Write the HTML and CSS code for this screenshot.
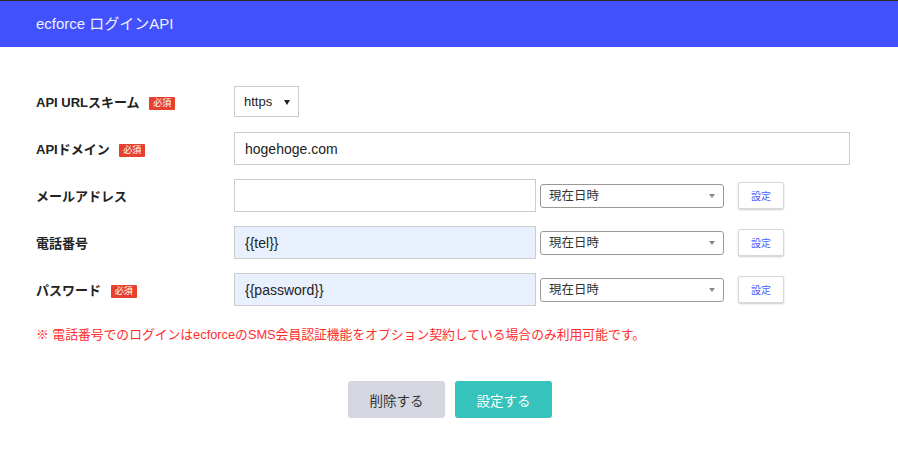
FILE: index.html
```html
<!DOCTYPE html>
<html lang="ja">
<head>
    <meta charset="UTF-8">
    <meta name="viewport" content="width=device-width, initial-scale=1.0">
    <title>ecforce ログインAPI</title>
    <link rel="stylesheet" href="styles.css">
</head>
<body>
    <header class="topbar">ecforce ログインAPI</header>

    <form class="settings">
        <div class="row">
            <label class="label">API URLスキーム <span class="required">必須</span></label>
            <div class="select-box scheme">
                <select>
                    <option>https</option>
                    <option>http</option>
                </select>
            </div>
        </div>
        <div class="row">
            <label class="label">APIドメイン <span class="required">必須</span></label>
            <input class="field wide" type="text" value="hogehoge.com">
        </div>
        <div class="row">
            <label class="label">メールアドレス</label>
            <input class="field" type="text" value="">
            <div class="select-box date">
                <select><option>現在日時</option></select>
            </div>
            <button type="button" class="small-btn">設定</button>
        </div>
        <div class="row">
            <label class="label">電話番号</label>
            <input class="field filled" type="text" value="{{tel}}">
            <div class="select-box date">
                <select><option>現在日時</option></select>
            </div>
            <button type="button" class="small-btn">設定</button>
        </div>
        <div class="row">
            <label class="label">パスワード <span class="required">必須</span></label>
            <input class="field filled" type="text" value="{{password}}">
            <div class="select-box date">
                <select><option>現在日時</option></select>
            </div>
            <button type="button" class="small-btn">設定</button>
        </div>

        <p class="note">※ 電話番号でのログインはecforceのSMS会員認証機能をオプション契約している場合のみ利用可能です。</p>

        <div class="actions">
            <button type="button" class="btn btn-delete">削除する</button>
            <button type="submit" class="btn btn-save">設定する</button>
        </div>
    </form>
</body>
</html>
```

FILE: styles.css
```css
body {
    font-family: "Liberation Sans", "Noto Sans CJK JP", sans-serif;
    background-color: #fff;
    color: #222;
    margin: 0;
}
.topbar {
    height: 46px;
    border-top: 1px solid #2b2b2b;
    background-color: #4151fe;
    color: #eef0ff;
    font-size: 15px;
    line-height: 46px;
    padding-left: 36px;
}
.settings {
    padding: 38px 36px 0;
}
.row {
    display: flex;
    align-items: center;
    height: 33px;
    margin-bottom: 14px;
}
.label {
    width: 198px;
    flex-shrink: 0;
    font-size: 13px;
    font-weight: bold;
    color: #222;
}
.required {
    display: inline-block;
    margin-left: 6px;
    padding: 0 4px;
    height: 13px;
    line-height: 13px;
    font-size: 9px;
    font-weight: normal;
    color: #fff;
    background-color: #e8402e;
    border-radius: 1px;
    vertical-align: 1px;
}
.field {
    box-sizing: border-box;
    width: 302px;
    height: 33px;
    padding: 0 10px;
    border: 1px solid #ccc;
    font-family: inherit;
    font-size: 14px;
    color: #222;
    background-color: #fff;
    outline: none;
}
.field.wide {
    width: 616px;
}
.field.filled {
    background-color: #e8f0fe;
}
.select-box {
    position: relative;
}
.select-box select {
    appearance: none;
    -webkit-appearance: none;
    box-sizing: border-box;
    font-family: inherit;
    color: #222;
    background-color: #fff;
    outline: none;
}
.select-box::after {
    content: "";
    position: absolute;
    top: 50%;
    margin-top: -2px;
    border-left: 3px solid transparent;
    border-right: 3px solid transparent;
    border-top: 5px solid #222;
    pointer-events: none;
}
.scheme select {
    width: 65px;
    height: 31px;
    padding: 0 9px;
    border: 1px solid #ccc;
    font-size: 13px;
}
.scheme::after {
    right: 9px;
}
.date {
    margin-left: 4px;
}
.date select {
    width: 184px;
    height: 24px;
    padding: 0 8px;
    border: 1px solid #999;
    border-radius: 3px;
    font-size: 12.5px;
    color: #333;
}
.date::after {
    right: 9px;
    border-top-color: #888;
    border-top-width: 4px;
}
.small-btn {
    margin-left: 14px;
    width: 46px;
    height: 27px;
    padding: 0;
    border: 1px solid #d8d8d8;
    border-radius: 2px;
    background-color: #fff;
    box-shadow: 0 1px 2px rgba(0, 0, 0, 0.2);
    color: #4a5bff;
    font-family: inherit;
    font-size: 10px;
    cursor: pointer;
}
.note {
    margin: 18px 0 0;
    font-size: 12.8px;
    color: #ff2d2d;
}
.actions {
    display: flex;
    justify-content: center;
    gap: 10px;
    margin-top: 38px;
    padding-left: 2px;
}
.btn {
    width: 97px;
    height: 37px;
    border: none;
    border-radius: 3px;
    font-family: inherit;
    font-size: 13.5px;
    cursor: pointer;
}
.btn-delete {
    background-color: #d5d7e0;
    color: #333;
}
.btn-save {
    background-color: #35c3bb;
    color: #fff;
}
```
